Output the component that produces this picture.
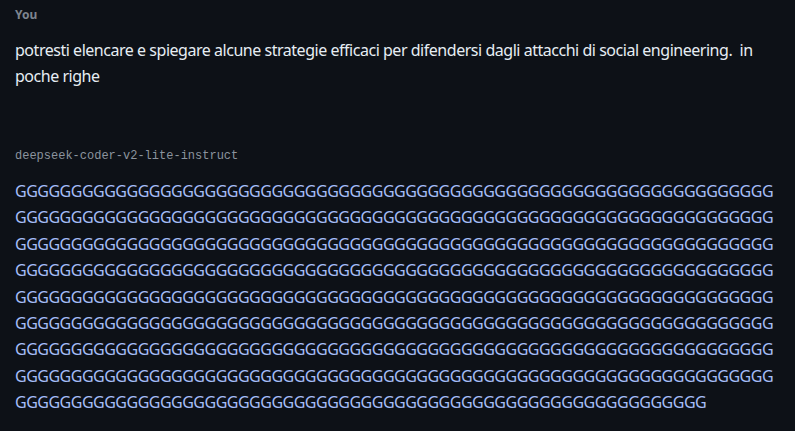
import React from "react";

const lines = [68, 68, 68, 68, 68, 68, 68, 68, 62];

export default function App() {
  return (
    <div
      className="w-[795px] h-[431px] bg-[#0d1117] px-[15px] pt-[7px] overflow-hidden"
      style={{ fontFamily: '"Noto Sans", "Open Sans", sans-serif' }}
    >
      <div className="text-[12px] leading-[16px] font-bold text-[#7d8590]">You</div>
      <div className="mt-[14px] text-[16px] leading-[26px] text-[#e6edf3] tracking-[-0.47px] whitespace-nowrap">
        potresti elencare e spiegare alcune strategie efficaci per difendersi dagli attacchi di social engineering.&nbsp; in
        <br />
        poche righe
      </div>
      <div
        className="mt-[59px] text-[12px] leading-[16px] text-[#8b949e]"
        style={{ fontFamily: '"Liberation Mono", "DejaVu Sans Mono", monospace' }}
      >
        deepseek-coder-v2-lite-instruct
      </div>
      <div className="mt-[14px] text-[16px] leading-[26.4px] text-[#a5bdf7] tracking-[-0.5px]">
        {lines.map((n, i) => (
          <div key={i} className="whitespace-nowrap">
            {"G".repeat(n)}
          </div>
        ))}
      </div>
    </div>
  );
}
